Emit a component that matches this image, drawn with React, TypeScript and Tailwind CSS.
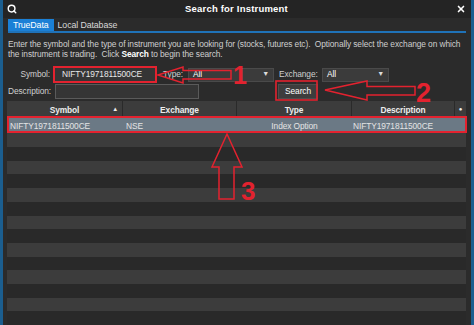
import React from 'react';
import { Search, X } from 'lucide-react';

const font = { fontFamily: '"Liberation Sans", Arial, sans-serif' };

function Select({ value, width }: { value: string; width: string }) {
  return (
    <div className={`${width} h-[14px] bg-[#3b3b3b] border border-[#4a4a4a] flex items-center justify-between pl-[4px] pr-[4px] text-white`}>
      <span>{value}</span>
      <span className="text-[7px] text-[#dcdcdc]">▼</span>
    </div>
  );
}

function Annotations() {
  const red = '#e3222f';
  return (
    <svg className="absolute inset-0 pointer-events-none" width="474" height="325" viewBox="0 0 474 325">
      <rect x="8" y="117" width="458" height="15" fill="none" stroke={red} strokeWidth="2" />
      <rect x="276" y="81" width="41" height="19" fill="none" stroke={red} strokeWidth="1.6" />
      <polygon points="158,75 183,67 183,70.5 231,70.5 231,79 183,79 183,83" fill="none" stroke={red} strokeWidth="1.5" />
      <polygon points="325,90 367,81 367,86.5 415,86.5 415,95 367,95 367,100" fill="none" stroke={red} strokeWidth="1.5" />
      <polygon points="227,134 242,167 234,167 234,199 219,199 219,167 212,167" fill="none" stroke={red} strokeWidth="1.5" />
      <text x="233" y="84" fill={red} fontSize="25" fontWeight="bold" style={font}>1</text>
      <text x="416" y="102" fill={red} fontSize="27" fontWeight="bold" style={font}>2</text>
      <text x="241" y="200" fill={red} fontSize="26" fontWeight="bold" style={font}>3</text>
    </svg>
  );
}

export default function App() {
  const rows = Array.from({ length: 14 });
  return (
    <div className="relative w-[474px] h-[325px] overflow-hidden bg-[#1b5e8f] flex text-[8.4px] tracking-[-0.1px] text-[#cfcfcf]" style={font}>
      <div className="ml-[3px] w-[468px] h-full bg-[#2b2b2b] flex flex-col">
        {/* title bar */}
        <div className="h-[19px] bg-[#242424] flex items-center justify-between px-[4px] text-white">
          <Search className="w-[10px] h-[10px]" strokeWidth={3.5} />
          <span className="font-bold text-[9.5px] tracking-[0.2px]">Search for Instrument</span>
          <X className="w-[10px] h-[10px] mr-[1px]" strokeWidth={4} />
        </div>

        {/* tabs */}
        <div className="mx-[5px] mt-[1px] flex items-end h-[12px] border-b-[2px] border-[#1f72b8] box-content text-[8.8px]">
          <div className="h-[12px] px-[5px] bg-[#1b80d6] text-white flex items-center">TrueData</div>
          <div className="h-[12px] px-[4px] flex items-center text-[#d8d8d8]">Local Database</div>
        </div>

        {/* help text */}
        <p className="mx-[5px] mt-[7px] leading-[9.5px] whitespace-nowrap">
          Enter the symbol and the type of instrument you are looking for (stocks, futures etc).&nbsp; Optionally select the exchange on which
          <br />
          the instrument is trading.&nbsp; Click <b className="text-white">Search</b> to begin the search.
        </p>

        {/* symbol row */}
        <div className="mt-[7px] flex items-center h-[17px]">
          <span className="w-[47px] text-right">Symbol:</span>
          <div className="ml-[3px] w-[104px] h-[17px] bg-[#353535] border-[2px] border-[#e3222f] flex items-center pl-[7px] text-[#e8e8e8]">
            NIFTY1971811500CE
          </div>
          <span className="ml-[6px] w-[25px]">Type:</span>
          <Select value="All" width="w-[86px]" />
          <span className="ml-[5px] w-[43px]">Exchange:</span>
          <Select value="All" width="w-[67px]" />
        </div>

        {/* description row */}
        <div className="mt-[1px] flex items-center h-[16px]">
          <span className="w-[47px] pl-[5px]">Description:</span>
          <div className="ml-[5px] w-[144px] h-[15px] bg-[#353535] border border-[#5a5a5a]" />
          <div className="ml-[79px] w-[40px] h-[15px] bg-[#3d3d3d] border border-[#4d4d4d] flex items-center justify-center text-white">
            Search
          </div>
        </div>

        {/* table */}
        <div className="mt-[2px] ml-[4px] w-[459px] flex flex-col">
          <div className="h-[17px] bg-[#3c3c3c] flex font-bold text-[#ececec]">
            <div className="w-[116px] relative flex items-center justify-center border-r border-[#2a2a2a]">
              Symbol
              <span className="absolute right-[4px] text-[6px] font-normal">▲</span>
            </div>
            <div className="w-[114px] flex items-center justify-center border-r border-[#2a2a2a]">Exchange</div>
            <div className="w-[115px] flex items-center justify-center border-r border-[#2a2a2a]">Type</div>
            <div className="w-[103px] flex items-center justify-center border-r border-[#2a2a2a]">Description</div>
            <div className="flex-1 flex items-center justify-center text-[6px]">●</div>
          </div>
          <div className="h-[15px] bg-[#6b7985] flex items-center text-[#e4e4e4]">
            <div className="w-[116px] pl-[3px]">NIFTY1971811500CE</div>
            <div className="w-[114px] pl-[3px]">NSE</div>
            <div className="w-[115px] text-center">Index Option</div>
            <div className="w-[103px] pl-[1px]">NIFTY1971811500CE</div>
          </div>
          {rows.map((_, i) => (
            <div key={i} className={i % 2 === 0 ? 'h-[13.7px] bg-[#3c3c3c]' : 'h-[13.7px] bg-[#292929]'} />
          ))}
        </div>
      </div>
      <Annotations />
    </div>
  );
}
